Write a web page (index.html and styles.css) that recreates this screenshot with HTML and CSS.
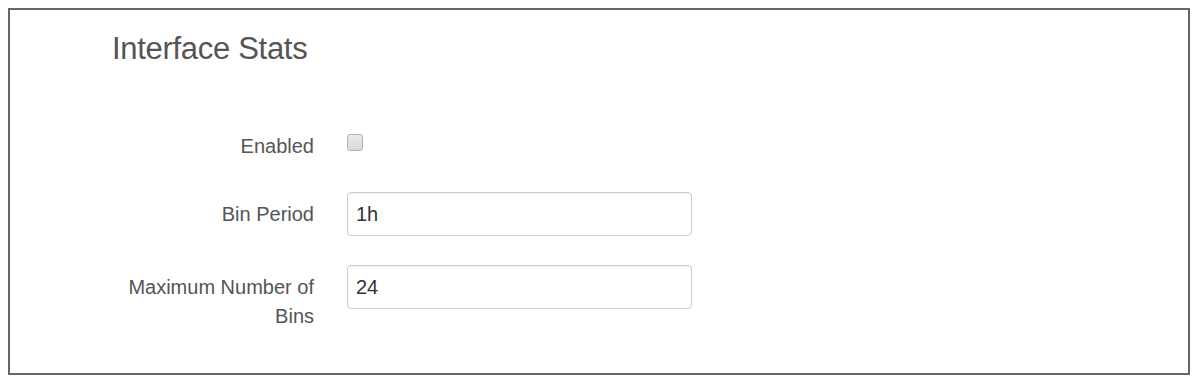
FILE: index.html
```html
<!DOCTYPE html>
<html>
<head>
<meta charset="utf-8">
<link rel="stylesheet" href="styles.css">
</head>
<body>
<div class="panel">
  <h2 class="title">Interface Stats</h2>
  <form class="form">
    <div class="row row-check">
      <label class="label" for="enabled">Enabled</label>
      <div class="control"><input class="check" type="checkbox" id="enabled"></div>
    </div>
    <div class="row">
      <label class="label label-input" for="bin">Bin Period</label>
      <div class="control"><input class="text" type="text" id="bin" value="1h"></div>
    </div>
    <div class="row">
      <label class="label label-input" for="max">Maximum Number of Bins</label>
      <div class="control"><input class="text" type="text" id="max" value="24"></div>
    </div>
  </form>
</div>
</body>
</html>
```
FILE: styles.css
```css
html, body {
  margin: 0;
  padding: 0;
  background: #ffffff;
}
body {
  padding: 8px 3px 1px 8px;
  font-family: "Liberation Sans", Arial, sans-serif;
}
.panel {
  border: 2px solid #666666;
  height: 363px;
  box-sizing: border-box;
  height: 367px;
  background: #ffffff;
  padding: 22px 0 0 0;
}
.title {
  margin: 0 0 58px 102px;
  font-size: 31px;
  line-height: 34px;
  font-weight: normal;
  color: #555555;
  letter-spacing: -0.3px;
}
.form {
  display: flex;
  flex-direction: column;
  gap: 29px;
}
.row {
  display: flex;
  align-items: flex-start;
  gap: 33px;
}
.row-check {
  min-height: 39px;
}
.label {
  width: 304px;
  flex: none;
  text-align: right;
  font-size: 20px;
  line-height: 28.6px;
  color: #555555;
  padding-top: 8px;
  box-sizing: border-box;
  padding-left: 110px;
}
.control {
  flex: none;
}
.check {
  appearance: none;
  -webkit-appearance: none;
  margin: 10px 0 0 0;
  width: 16px;
  height: 17px;
  border: 1px solid #b4b4b4;
  border-radius: 3px;
  background: linear-gradient(#e9e9e9, #d9d9d9);
  box-sizing: border-box;
  display: block;
}
.text {
  display: block;
  width: 345px;
  height: 44px;
  box-sizing: border-box;
  border: 1px solid #cccccc;
  border-radius: 4px;
  box-shadow: inset 0 1px 1px rgba(0,0,0,0.06);
  padding: 0 8px;
  font-family: "Liberation Sans", Arial, sans-serif;
  font-size: 20px;
  color: #333333;
  background: #ffffff;
  margin: 0;
}
```
